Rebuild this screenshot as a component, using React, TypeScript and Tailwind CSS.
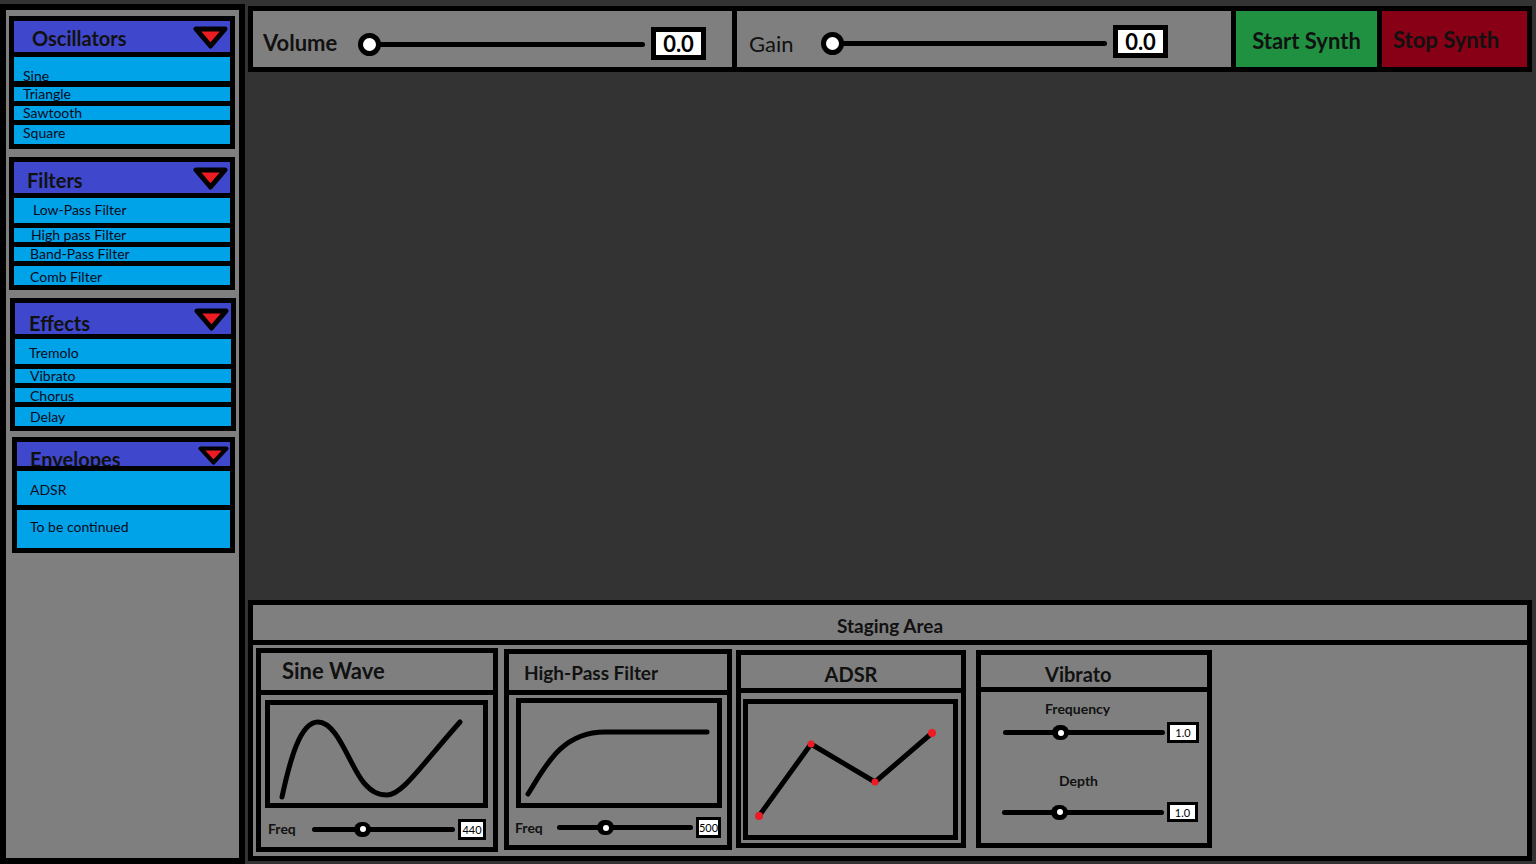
import React from 'react'

type Item = { label: string; cls: string }
type Section = {
  title: string
  box: string
  head: string
  titleCls: string
  arrow: string
  items: Item[]
}

const sections: Section[] = [
  {
    title: 'Oscillators',
    box: 'ml-[3px] mt-[6px] w-[226px]',
    head: 'h-[31px]',
    titleCls: 'pl-[18px] pt-[7px]',
    arrow: 'mt-[5px] mr-[2px] h-[23px] w-[35px]',
    items: [
      { label: 'Sine', cls: 'mt-[5px] h-[24px] pl-[9px] pt-[12px]' },
      { label: 'Triangle', cls: 'mt-[6px] h-[14px] pl-[9px] pt-0' },
      { label: 'Sawtooth', cls: 'mt-[5px] h-[14px] pl-[9px] pt-0' },
      { label: 'Square', cls: 'mt-[5px] h-[19px] pl-[9px] pt-[1px]' },
    ],
  },
  {
    title: 'Filters',
    box: 'ml-[3px] mt-[8px] w-[226px]',
    head: 'h-[31px]',
    titleCls: 'pl-[13px] pt-[8px]',
    arrow: 'mt-[5px] mr-[2px] h-[23px] w-[35px]',
    items: [
      { label: 'Low-Pass Filter', cls: 'mt-[5px] h-[25px] pl-[19px] pt-[5px]' },
      { label: 'High pass Filter', cls: 'mt-[5px] h-[14px] pl-[17px] pt-0' },
      { label: 'Band-Pass Filter', cls: 'mt-[5px] h-[14px] pl-[16px] pt-0' },
      { label: 'Comb Filter', cls: 'mt-[5px] h-[19px] pl-[16px] pt-[4px]' },
    ],
  },
  {
    title: 'Effects',
    box: 'ml-[4px] mt-[8px] w-[226px]',
    head: 'h-[31px]',
    titleCls: 'pl-[14px] pt-[10px]',
    arrow: 'mt-[5px] mr-[2px] h-[23px] w-[35px]',
    items: [
      { label: 'Tremolo', cls: 'mt-[5px] h-[25px] pl-[14px] pt-[7px]' },
      { label: 'Vibrato', cls: 'mt-[5px] h-[14px] pl-[15px] pt-0' },
      { label: 'Chorus', cls: 'mt-[5px] h-[14px] pl-[15px] pt-[1px]' },
      { label: 'Delay', cls: 'mt-[5px] h-[19px] pl-[15px] pt-[3px]' },
    ],
  },
  {
    title: 'Envelopes',
    box: 'ml-[6px] mt-[6px] w-[223px]',
    head: 'h-[24px]',
    titleCls: 'pl-[13px] pt-[7px]',
    arrow: 'mt-[4px] mr-[1px] h-[19px] w-[31px]',
    items: [
      { label: 'ADSR', cls: 'mt-[5px] h-[34px] pl-[13px] pt-[12px]' },
      { label: 'To be continued', cls: 'mt-[5px] h-[38px] pl-[13px] pt-[10px]' },
    ],
  },
]

function Arrow({ cls }: { cls: string }) {
  return (
    <svg viewBox="0 0 35 23" preserveAspectRatio="none" className={`shrink-0 ${cls}`}>
      <polygon
        points="3,3 32,3 17.5,20"
        fill="#ed1c24"
        stroke="#000"
        strokeWidth="5"
        strokeLinejoin="round"
      />
    </svg>
  )
}

function Sidebar() {
  return (
    <aside className="mt-[4px] h-[860px] w-[245px] shrink-0 border-[6px] border-black bg-[#7f7f7f]">
      {sections.map((s) => (
        <div key={s.title} className={`border-[5px] border-black bg-black ${s.box}`}>
          <div className={`flex items-start overflow-hidden bg-[#3f48cc] ${s.head}`}>
            <span className={`text-[20px] font-bold leading-[20px] text-[#111] ${s.titleCls}`}>
              {s.title}
            </span>
            <Arrow cls={`ml-auto ${s.arrow}`} />
          </div>
          {s.items.map((it) => (
            <div
              key={it.label}
              className={`overflow-hidden bg-[#00a2e8] text-[14px] leading-[14px] text-[#0a0a1a] ${it.cls}`}
            >
              {it.label}
            </div>
          ))}
        </div>
      ))}
    </aside>
  )
}

function BigSlider({ w }: { w: string }) {
  return (
    <div className={`relative h-[23px] ${w}`}>
      <div className="absolute left-[11px] right-0 top-[9px] h-[5px] rounded-full bg-black" />
      <div className="absolute left-0 top-0 h-[23px] w-[23px] rounded-full border-[5px] border-black bg-white" />
    </div>
  )
}

function SmallSlider({ w, thumb }: { w: string; thumb: string }) {
  return (
    <div className={`relative h-[15px] ${w}`}>
      <div className="absolute inset-x-0 top-[5px] h-[5px] rounded-full bg-black" />
      <div
        className={`absolute top-0 flex h-[15px] w-[17px] items-center justify-center rounded-full bg-black ${thumb}`}
      >
        <div className="h-[6px] w-[6px] rounded-full bg-white" />
      </div>
    </div>
  )
}

function SmallValue({ cls, value }: { cls: string; value: string }) {
  return (
    <div
      className={`flex items-center justify-center border-[3px] border-black bg-white text-[11px] leading-none ${cls}`}
    >
      {value}
    </div>
  )
}

function TopBar() {
  return (
    <div className="mt-[6px] flex h-[66px] gap-[5px] border-[5px] border-black bg-black">
      {/* Volume */}
      <div className="flex w-[479px] items-start bg-[#7f7f7f] pl-[10px]">
        <span className="mt-[21px] w-[95px] text-[22px] font-bold leading-[22px] text-[#111]">Volume</span>
        <div className="mt-[22px]">
          <BigSlider w="w-[287px]" />
        </div>
        <div className="ml-[6px] mt-[16px] flex h-[33px] w-[55px] items-center justify-center border-[5px] border-black bg-white pt-[1px] text-[22px] font-bold leading-none">
          0.0
        </div>
      </div>

      {/* Gain */}
      <div className="flex w-[494px] items-start bg-[#7f7f7f] pl-[12px]">
        <span className="mt-[22px] w-[72px] text-[22px] leading-[22px] text-[#111]">Gain</span>
        <div className="mt-[21px]">
          <BigSlider w="w-[286px]" />
        </div>
        <div className="ml-[6px] mt-[14px] flex h-[33px] w-[55px] items-center justify-center border-[5px] border-black bg-white pt-[1px] text-[22px] font-bold leading-none">
          0.0
        </div>
      </div>

      <div className="w-[141px] bg-[#1f9140] pt-[19px] text-center text-[22px] font-bold leading-[22px] text-[#111]">
        Start Synth
      </div>
      <div className="w-[145px] bg-[#880015] pl-[11px] pt-[18px] text-[22px] font-bold leading-[22px] text-[#111]">
        Stop Synth
      </div>
    </div>
  )
}

function StagingArea() {
  return (
    <div className="mt-[528px] flex h-[261px] flex-col border-[5px] border-black bg-[#7f7f7f]">
      <div className="h-[40px] shrink-0 border-b-[5px] border-black pt-[11px] text-center text-[19px] font-bold leading-[19px] text-[#111]">
        Staging Area
      </div>

      <div className="flex items-start">
        {/* Sine Wave */}
        <div className="ml-[3px] mt-[3px] h-[204px] w-[242px] border-[5px] border-black">
          <div className="h-[42px] border-b-[5px] border-black pl-[21px] pt-[7px] text-[22px] font-bold leading-[22px] text-[#111]">
            Sine Wave
          </div>
          <div className="ml-[4px] mt-[5px] h-[108px] w-[223px] border-[5px] border-black">
            <svg viewBox="0 0 213 98" className="block h-full w-full">
              <path
                d="M12 92 C20 55 30 17 48 17 C68 17 80 62 94 78 C102 87 108 90 117 90 C132 90 150 62 190 17"
                fill="none"
                stroke="#000"
                strokeWidth="5"
                strokeLinecap="round"
              />
            </svg>
          </div>
          <div className="mt-[10px] flex h-[22px] items-center pl-[7px]">
            <span className="w-[44px] text-[14px] font-bold leading-none text-[#111]">Freq</span>
            <SmallSlider w="w-[143px]" thumb="left-[42px]" />
            <SmallValue cls="ml-[3px] h-[21px] w-[28px]" value="440" />
          </div>
        </div>

        {/* High-Pass Filter */}
        <div className="ml-[6px] mt-[4px] h-[201px] w-[228px] border-[5px] border-black">
          <div className="h-[41px] border-b-[5px] border-black pl-[15px] pt-[9px] text-[19px] font-bold leading-[19px] text-[#111]">
            High-Pass Filter
          </div>
          <div className="ml-[7px] mt-[3px] h-[110px] w-[206px] border-[5px] border-black">
            <svg viewBox="0 0 196 100" className="block h-full w-full">
              <path
                d="M7 91 C24 64 40 29 84 29 L186 29"
                fill="none"
                stroke="#000"
                strokeWidth="5"
                strokeLinecap="round"
              />
            </svg>
          </div>
          <div className="mt-[9px] flex h-[21px] items-center pl-[6px]">
            <span className="w-[42px] text-[14px] font-bold leading-none text-[#111]">Freq</span>
            <SmallSlider w="w-[136px]" thumb="left-[40px]" />
            <SmallValue cls="ml-[3px] h-[21px] w-[25px]" value="500" />
          </div>
        </div>

        {/* ADSR */}
        <div className="ml-[4px] mt-[5px] h-[198px] w-[230px] border-[5px] border-black">
          <div className="h-[38px] border-b-[5px] border-black pt-[9px] text-center text-[20px] font-bold leading-[20px] text-[#111]">
            ADSR
          </div>
          <div className="ml-[2px] mt-[6px] h-[141px] w-[215px] border-[5px] border-black">
            <svg viewBox="0 0 205 131" className="block h-full w-full">
              <polyline
                points="11,112 63,40 127,78 184,29"
                fill="none"
                stroke="#000"
                strokeWidth="5"
                strokeLinejoin="round"
                strokeLinecap="round"
              />
              <circle cx="11" cy="112" r="4" fill="#ed1c24" />
              <circle cx="63" cy="40" r="3.5" fill="#ed1c24" />
              <circle cx="127" cy="78" r="3.5" fill="#ed1c24" />
              <circle cx="184" cy="29" r="4" fill="#ed1c24" />
            </svg>
          </div>
        </div>

        {/* Vibrato */}
        <div className="ml-[10px] mt-[5px] h-[198px] w-[236px] border-[5px] border-black">
          <div className="h-[37px] border-b-[5px] border-black pl-[64px] pt-[9px] text-[20px] font-bold leading-[20px] text-[#111]">
            Vibrato
          </div>
          <div className="mt-[10px] pl-[64px] text-[14px] font-bold leading-[14px] text-[#111]">Frequency</div>
          <div className="mt-[6px] flex h-[21px] items-center pl-[22px]">
            <SmallSlider w="w-[162px]" thumb="left-[49px]" />
            <SmallValue cls="ml-[2px] h-[21px] w-[32px]" value="1.0" />
          </div>
          <div className="mt-[31px] pl-[78px] text-[14px] font-bold leading-[14px] text-[#111]">Depth</div>
          <div className="mt-[14px] flex h-[20px] items-center pl-[21px]">
            <SmallSlider w="w-[162px]" thumb="left-[49px]" />
            <SmallValue cls="ml-[3px] h-[20px] w-[31px]" value="1.0" />
          </div>
        </div>
      </div>
    </div>
  )
}

export default function App() {
  return (
    <div className="flex h-[864px] w-[1536px] overflow-hidden bg-[#333333] font-[Lato,sans-serif] text-black">
      <Sidebar />
      <div className="ml-[3px] flex w-[1284px] shrink-0 flex-col">
        <TopBar />
        <StagingArea />
      </div>
    </div>
  )
}
